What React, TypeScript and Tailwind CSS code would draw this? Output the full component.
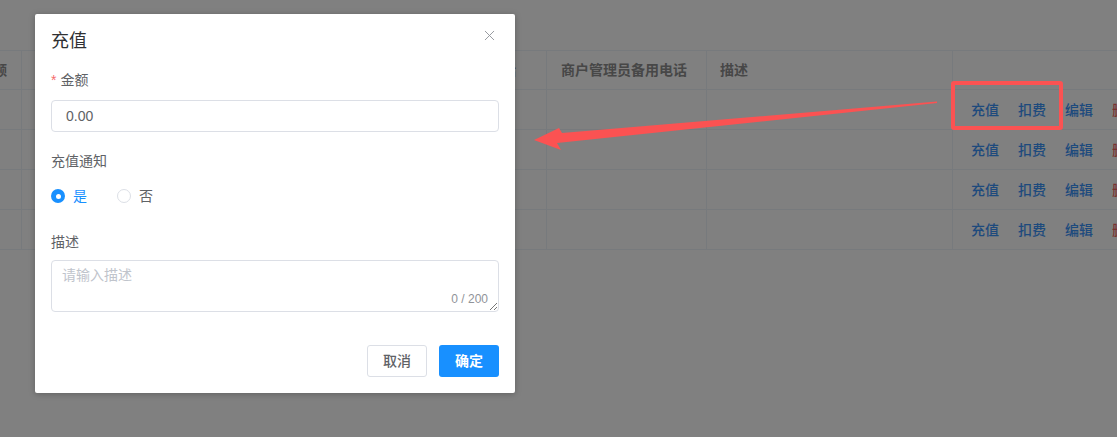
import { X } from 'lucide-react';

const rows = [0, 1, 2, 3];

export default function App() {
  return (
    <div
      className="relative w-[1117px] h-[437px] overflow-hidden bg-[#808080] text-[14px]"
      style={{ fontFamily: '"Liberation Sans", "Noto Sans CJK SC", sans-serif' }}
    >
      {/* Table behind the mask */}
      <div className="pt-[50px]">
        <div className="border-t border-[#777a7d] w-[1200px]">
          <div className="flex h-[39px] border-b border-[#777a7d] text-[#474747] font-bold">
            <div className="w-[22px] shrink-0 border-r border-[#777a7d] flex items-center justify-end overflow-hidden pr-[14px]">
              <span className="whitespace-nowrap">余额</span>
            </div>
            <div className="w-[525px] shrink-0 border-r border-[#777a7d] flex items-center justify-end pr-[30px]">
              <span className="whitespace-nowrap">商户管理员电话</span>
            </div>
            <div className="w-[160px] shrink-0 border-r border-[#777a7d] flex items-center pl-[14px]">
              商户管理员备用电话
            </div>
            <div className="w-[246px] shrink-0 border-r border-[#777a7d] flex items-center pl-[13px]">
              描述
            </div>
            <div className="flex-1" />
          </div>
          {rows.map((r) => (
            <div key={r} className="flex h-[40px] border-b border-[#777a7d]">
              <div className="w-[22px] shrink-0 border-r border-[#777a7d]" />
              <div className="w-[525px] shrink-0 border-r border-[#777a7d]" />
              <div className="w-[160px] shrink-0 border-r border-[#777a7d]" />
              <div className="w-[246px] shrink-0 border-r border-[#777a7d]" />
              <div className="flex items-center gap-[19px] pl-[18px] pt-[1px] font-medium text-[#1d4a7d] whitespace-nowrap">
                <span>充值</span>
                <span>扣费</span>
                <span>编辑</span>
                <span className="text-[#7a3232]">删除</span>
              </div>
            </div>
          ))}
        </div>
      </div>

      {/* Annotation: red box and arrow */}
      <div className="absolute left-[951px] top-[81px] w-[112px] h-[49px] border-[4px] border-[#fb5252] rounded-[3px]" />
      <svg className="absolute left-0 top-0" width="1117" height="437">
        <polygon
          points="937,101.5 562,133 559,128 534,140 561,150 557,143 937,103"
          fill="#fb5252"
        />
      </svg>

      {/* Dialog */}
      <div className="absolute left-[35px] top-[14px] w-[480px] h-[379px] bg-white rounded-[2px] shadow-[0_1px_6px_rgba(0,0,0,0.25)] flex flex-col">
        <div className="flex items-start justify-between pl-[16px] pr-[17px] pt-[14px]">
          <span className="text-[18px] leading-[26px] text-[#303133]">充值</span>
          <X className="w-[17px] h-[17px] mt-[-1px] text-[#909399]" strokeWidth={1.3} />
        </div>
        <div className="px-[16px] pt-[14px] flex flex-col text-[#606266]">
          <div className="h-[24px] flex items-center">
            <span className="text-[#f56c6c] mr-[4px]">*</span>
            <span>金额</span>
          </div>
          <div className="mt-[8px] h-[32px] border border-[#dcdfe6] rounded-[4px] flex items-center px-[14px] text-[#606266]">
            0.00
          </div>
          <div className="mt-[17px] h-[24px] flex items-center">充值通知</div>
          <div className="mt-[11px] h-[24px] flex items-center">
            <span className="w-[14px] h-[14px] rounded-full bg-[#1890ff] flex items-center justify-center">
              <span className="w-[5px] h-[5px] rounded-full bg-white" />
            </span>
            <span className="ml-[8px] text-[#1890ff]">是</span>
            <span className="ml-[30px] w-[14px] h-[14px] rounded-full border border-[#dcdfe6] bg-white" />
            <span className="ml-[8px]">否</span>
          </div>
          <div className="mt-[22px] h-[24px] flex items-center">描述</div>
          <div className="relative mt-[6px] h-[52px] border border-[#dcdfe6] rounded-[4px] px-[10px] pt-[4px]">
            <span className="text-[#c0c4cc]">请输入描述</span>
            <span className="absolute right-[10px] bottom-[3px] text-[12px] text-[#909399]">0 / 200</span>
            <svg className="absolute right-[1px] bottom-[1px]" width="8" height="8">
              <line x1="1" y1="8" x2="8" y2="1" stroke="#777" strokeWidth="1" />
              <line x1="5" y1="8" x2="8" y2="5" stroke="#777" strokeWidth="1" />
            </svg>
          </div>
        </div>
        <div className="mt-auto mb-[16px] px-[16px] flex justify-end gap-[12px]">
          <button className="w-[60px] h-[32px] border border-[#dcdfe6] rounded-[3px] bg-white text-[#606266] font-medium">
            取消
          </button>
          <button className="w-[60px] h-[32px] rounded-[3px] bg-[#1890ff] text-white font-bold">
            确定
          </button>
        </div>
      </div>
    </div>
  );
}
